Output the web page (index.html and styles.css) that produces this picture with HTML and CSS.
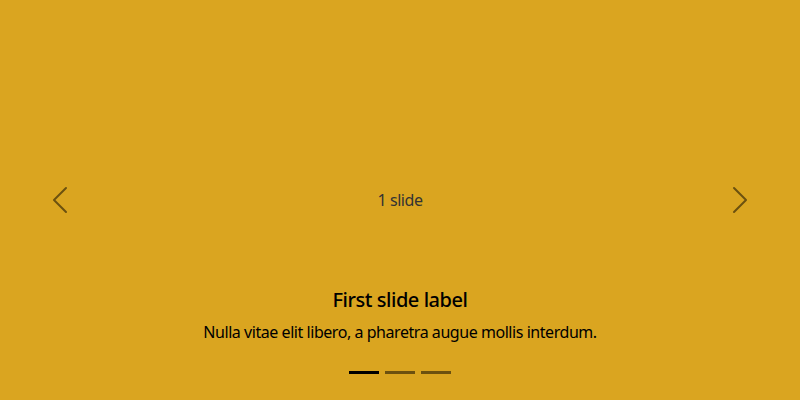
FILE: index.html
```html
<!DOCTYPE html>
<html lang="en">
<head>
<meta charset="utf-8">
<title>Carousel</title>
<link rel="stylesheet" href="styles.css">
</head>
<body>
<div class="carousel">
  <div class="slide">
    <span class="slide-text">1 slide</span>
  </div>
  <div class="caption">
    <h5 class="caption-title">First slide label</h5>
    <p class="caption-text">Nulla vitae elit libero, a pharetra augue mollis interdum.</p>
  </div>
  <button class="control control-prev" type="button" aria-label="Previous">
    <svg class="control-icon" viewBox="0 0 16 16" width="32" height="32"><path d="M11.354 1.646a.5.5 0 0 1 0 .708L5.707 8l5.647 5.646a.5.5 0 0 1-.708.708l-6-6a.5.5 0 0 1 0-.708l6-6a.5.5 0 0 1 .708 0z"/></svg>
  </button>
  <button class="control control-next" type="button" aria-label="Next">
    <svg class="control-icon" viewBox="0 0 16 16" width="32" height="32"><path d="M4.646 1.646a.5.5 0 0 1 .708 0l6 6a.5.5 0 0 1 0 .708l-6 6a.5.5 0 0 1-.708-.708L10.293 8 4.646 2.354a.5.5 0 0 1 0-.708z"/></svg>
  </button>
  <div class="indicators">
    <span class="indicator active"></span>
    <span class="indicator"></span>
    <span class="indicator"></span>
  </div>
</div>
</body>
</html>
```

FILE: styles.css
```css
* { box-sizing: border-box; }
html, body { margin: 0; padding: 0; }
body {
  font-family: "Noto Sans", "Open Sans", sans-serif;
  color: #212529;
  font-size: 16px;
  line-height: 1.5;
  letter-spacing: -0.45px;
}
.carousel {
  position: relative;
  width: 800px;
  height: 400px;
  background: #daa520;
  overflow: hidden;
}
.slide {
  height: 400px;
  display: flex;
  align-items: center;
  justify-content: center;
}
.slide-text {
  color: #333;
  font-size: 16px;
}
.caption {
  position: absolute;
  left: 15%;
  right: 15%;
  bottom: 20px;
  padding: 20px 0;
  text-align: center;
  color: #000;
}
.caption-title {
  margin: 0 0 8px;
  font-size: 20px;
  font-weight: 500;
  line-height: 1.2;
}
.caption-text {
  margin: 0 0 16px;
  font-size: 16px;
  line-height: 24px;
}
.control {
  position: absolute;
  top: 0;
  bottom: 0;
  width: 15%;
  display: flex;
  align-items: center;
  justify-content: center;
  padding: 0;
  border: 0;
  background: none;
  opacity: 0.5;
}
.control-prev { left: 0; }
.control-next { right: 0; }
.control-icon { fill: #000; display: block; }
.indicators {
  position: absolute;
  left: 15%;
  right: 15%;
  bottom: 0;
  margin-bottom: 16px;
  display: flex;
  justify-content: center;
}
.indicator {
  width: 30px;
  height: 3px;
  margin: 0 3px;
  box-sizing: content-box;
  border-top: 10px solid transparent;
  border-bottom: 10px solid transparent;
  background-clip: padding-box;
  background-color: #000;
  opacity: 0.5;
}
.indicator.active { opacity: 1; }
```
